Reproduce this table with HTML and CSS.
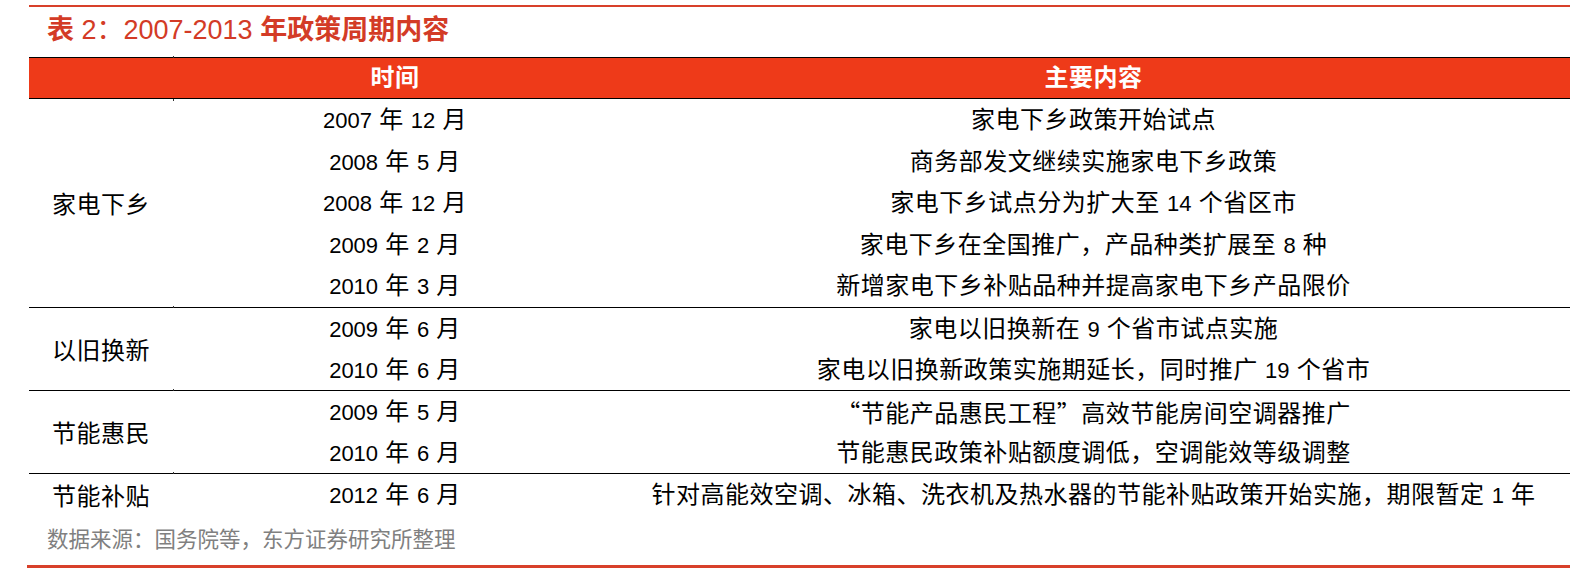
FILE: index.html
```html
<!DOCTYPE html>
<html lang="zh-CN">
<head>
<meta charset="utf-8">
<title>表 2：2007-2013 年政策周期内容</title>
<link rel="stylesheet" href="styles.css">
</head>
<body>
<div class="page">
  <div class="rule-top"></div>
  <div class="title"><span class="b">表</span> 2：2007-2013 <span class="b">年政策周期内容</span></div>
  <div class="table">
    <div class="thead">
      <div class="th"></div>
      <div class="th c">时间</div>
      <div class="th c">主要内容</div>
    </div>
    <div class="group g1">
      <div class="cat r5">家电下乡</div>
      <div class="td c"><span class="n">2007</span> 年 <span class="n">12</span> 月</div>
      <div class="td c">家电下乡政策开始试点</div>
      <div class="td c"><span class="n">2008</span> 年 <span class="n">5</span> 月</div>
      <div class="td c">商务部发文继续实施家电下乡政策</div>
      <div class="td c"><span class="n">2008</span> 年 <span class="n">12</span> 月</div>
      <div class="td c">家电下乡试点分为扩大至 <span class="n">14</span> 个省区市</div>
      <div class="td c"><span class="n">2009</span> 年 <span class="n">2</span> 月</div>
      <div class="td c">家电下乡在全国推广，产品种类扩展至 <span class="n">8</span> 种</div>
      <div class="td c"><span class="n">2010</span> 年 <span class="n">3</span> 月</div>
      <div class="td c">新增家电下乡补贴品种并提高家电下乡产品限价</div>
    </div>
    <div class="group">
      <div class="cat r2">以旧换新</div>
      <div class="td c"><span class="n">2009</span> 年 <span class="n">6</span> 月</div>
      <div class="td c">家电以旧换新在 <span class="n">9</span> 个省市试点实施</div>
      <div class="td c"><span class="n">2010</span> 年 <span class="n">6</span> 月</div>
      <div class="td c">家电以旧换新政策实施期延长，同时推广 <span class="n">19</span> 个省市</div>
    </div>
    <div class="group">
      <div class="cat r2">节能惠民</div>
      <div class="td c"><span class="n">2009</span> 年 <span class="n">5</span> 月</div>
      <div class="td c"><span class="q">“</span>节能产品惠民工程<span class="q">”</span>高效节能房间空调器推广</div>
      <div class="td c"><span class="n">2010</span> 年 <span class="n">6</span> 月</div>
      <div class="td c">节能惠民政策补贴额度调低，空调能效等级调整</div>
    </div>
    <div class="group">
      <div class="cat r1">节能补贴</div>
      <div class="td c"><span class="n">2012</span> 年 <span class="n">6</span> 月</div>
      <div class="td c">针对高能效空调、冰箱、洗衣机及热水器的节能补贴政策开始实施，期限暂定 <span class="n">1</span> 年</div>
    </div>
  </div>
  <div class="source">数据来源：国务院等，东方证券研究所整理</div>
  <div class="rule-bottom"></div>
</div>
</body>
</html>
```

FILE: styles.css
```css
html, body {
  margin: 0;
  padding: 0;
  background: #ffffff;
}

body {
  font-family: "Liberation Sans", "Noto Sans CJK SC", sans-serif;
  color: #000000;
}

.page {
  width: 1541px;
  margin-left: 29px;
  padding-top: 5px;
}

.rule-top {
  height: 2px;
  background: #d8402a;
}

.title {
  height: 28px;
  line-height: 28px;
  padding: 9px 0 13px 18px;
  font-size: 27px;
  color: #d33b26;
  white-space: nowrap;
}

.title .b {
  font-weight: bold;
}

.table {
  font-size: 24px;
  letter-spacing: 0.5px;
}

.thead {
  position: relative;
  display: grid;
  grid-template-columns: 144px 444px 1fr;
  height: 40px;
  border-top: 1px solid #000;
  border-bottom: 1px solid #000;
  background: #ee3a19;
  color: #ffffff;
  font-weight: bold;
}

.thead::before,
.thead::after {
  content: "";
  position: absolute;
  left: 144px;
  width: 1px;
  height: 2px;
  background: #333;
}

.thead::before {
  top: -2px;
}

.thead::after {
  bottom: -3px;
}

.th {
  line-height: 40px;
  white-space: nowrap;
}

.group {
  position: relative;
  display: grid;
  grid-template-columns: 144px 444px 1fr;
  grid-auto-rows: 41px;
  border-top: 1px solid #000;
}

.group::before {
  content: "";
  position: absolute;
  left: 144px;
  top: -2px;
  width: 1px;
  height: 2px;
  background: #333;
}

.group.g1 {
  border-top: none;
  grid-auto-rows: 41.6px;
}

.group.g1::before {
  display: none;
}

.cat {
  grid-column: 1;
  display: flex;
  align-items: center;
  padding-left: 23px;
  white-space: nowrap;
}

.cat.r5 { grid-row: 1 / span 5; }
.cat.r2 { grid-row: 1 / span 2; }
.cat.r1 { grid-row: 1 / span 1; }

.td {
  line-height: 41px;
  white-space: nowrap;
}

.g1 .td {
  line-height: 41.6px;
}

.c {
  text-align: center;
}

.n {
  font-size: 22px;
  letter-spacing: 0;
}

.q {
  font-family: "Noto Sans CJK SC", sans-serif;
}

.source {
  margin-top: 12px;
  padding-left: 18px;
  height: 26px;
  line-height: 26px;
  font-size: 21.5px;
  color: #808080;
  white-space: nowrap;
}

.rule-bottom {
  margin-top: 12px;
  margin-left: -2px;
  height: 3px;
  background: #d8402a;
}
```
